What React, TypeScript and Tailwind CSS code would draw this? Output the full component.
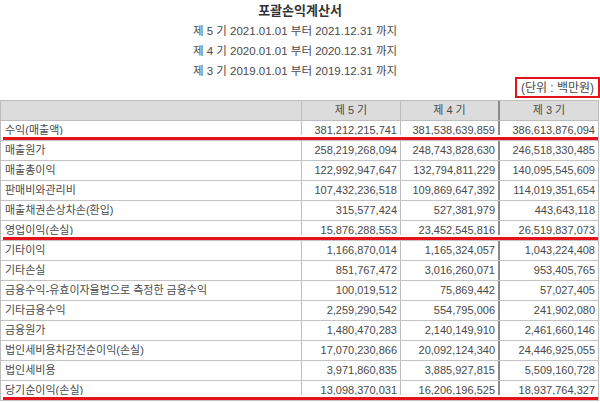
import React from "react";

type Row = { label: string; v: [string, string, string]; red?: boolean };

const rows: Row[] = [
  { label: "수익(매출액)", v: ["381,212,215,741", "381,538,639,859", "386,613,876,094"], red: true },
  { label: "매출원가", v: ["258,219,268,094", "248,743,828,630", "246,518,330,485"] },
  { label: "매출총이익", v: ["122,992,947,647", "132,794,811,229", "140,095,545,609"] },
  { label: "판매비와관리비", v: ["107,432,236,518", "109,869,647,392", "114,019,351,654"] },
  { label: "매출채권손상차손(환입)", v: ["315,577,424", "527,381,979", "443,643,118"] },
  { label: "영업이익(손실)", v: ["15,876,288,553", "23,452,545,816", "26,519,837,073"], red: true },
  { label: "기타이익", v: ["1,166,870,014", "1,165,324,057", "1,043,224,408"] },
  { label: "기타손실", v: ["851,767,472", "3,016,260,071", "953,405,765"] },
  { label: "금융수익-유효이자율법으로 측정한 금융수익", v: ["100,019,512", "75,869,442", "57,027,405"] },
  { label: "기타금융수익", v: ["2,259,290,542", "554,795,006", "241,902,080"] },
  { label: "금융원가", v: ["1,480,470,283", "2,140,149,910", "2,461,660,146"] },
  { label: "법인세비용차감전순이익(손실)", v: ["17,070,230,866", "20,092,124,340", "24,446,925,055"] },
  { label: "법인세비용", v: ["3,971,860,835", "3,885,927,815", "5,509,160,728"] },
  { label: "당기순이익(손실)", v: ["13,098,370,031", "16,206,196,525", "18,937,764,327"], red: true },
];

const font = { fontFamily: '"Liberation Sans", "Noto Sans CJK KR", sans-serif' };

export default function App() {
  return (
    <div className="w-[600px] h-[403px] bg-white overflow-hidden text-[#4a4a4a]" style={font}>
      <div className="h-[22px] flex items-center justify-center text-[13px] font-bold text-[#333]">
        포괄손익계산서
      </div>
      <div className="pr-[10px]">
        <div className="h-[20px] flex items-center justify-center text-[11.5px]">제 5 기 2021.01.01 부터 2021.12.31 까지</div>
        <div className="h-[20px] flex items-center justify-center text-[11.5px]">제 4 기 2020.01.01 부터 2020.12.31 까지</div>
        <div className="h-[20px] flex items-center justify-center text-[11.5px]">제 3 기 2019.01.01 부터 2019.12.31 까지</div>
      </div>
      <div className="flex justify-end -mt-[5px] mb-[2px]">
        <div className="h-[21px] w-[85px] border-2 border-[#e3121b] flex items-center justify-center text-[12px]">
          (단위 : 백만원)
        </div>
      </div>
      <div className="w-[599px] border-t border-l border-r border-[#bdbdbd]">
        <div className="flex h-[20px] bg-[#dcdcdc] border-b border-[#bdbdbd] text-[11px]">
          <div className="w-[301px] border-r border-[#bdbdbd]" />
          <div className="w-[99px] border-r border-[#bdbdbd] flex items-center justify-center">제 5 기</div>
          <div className="w-[99px] border-r-2 border-[#8a8a8a] flex items-center justify-center">제 4 기</div>
          <div className="flex-1 flex items-center justify-center">제 3 기</div>
        </div>
        {rows.map((r) => (
          <div key={r.label} className="relative flex h-[20px] border-b border-[#c4c4c4] text-[11px]">
            <div className="w-[301px] border-r border-[#bdbdbd] flex items-center pl-[4px] whitespace-nowrap">
              {r.label}
            </div>
            <div className="w-[99px] border-r border-[#bdbdbd] flex items-center justify-end pr-[3px]">{r.v[0]}</div>
            <div className="w-[99px] border-r-2 border-[#8a8a8a] flex items-center justify-end pr-[3px]">{r.v[1]}</div>
            <div className="flex-1 flex items-center justify-end pr-[3px]">{r.v[2]}</div>
            {r.red && (
              <div className="absolute left-[2px] right-[0px] bottom-[0px] flex flex-col">
                <div className="h-[2px] bg-white" />
                <div className="h-[3px] bg-[#e3121b]" />
              </div>
            )}
          </div>
        ))}
      </div>
    </div>
  );
}
